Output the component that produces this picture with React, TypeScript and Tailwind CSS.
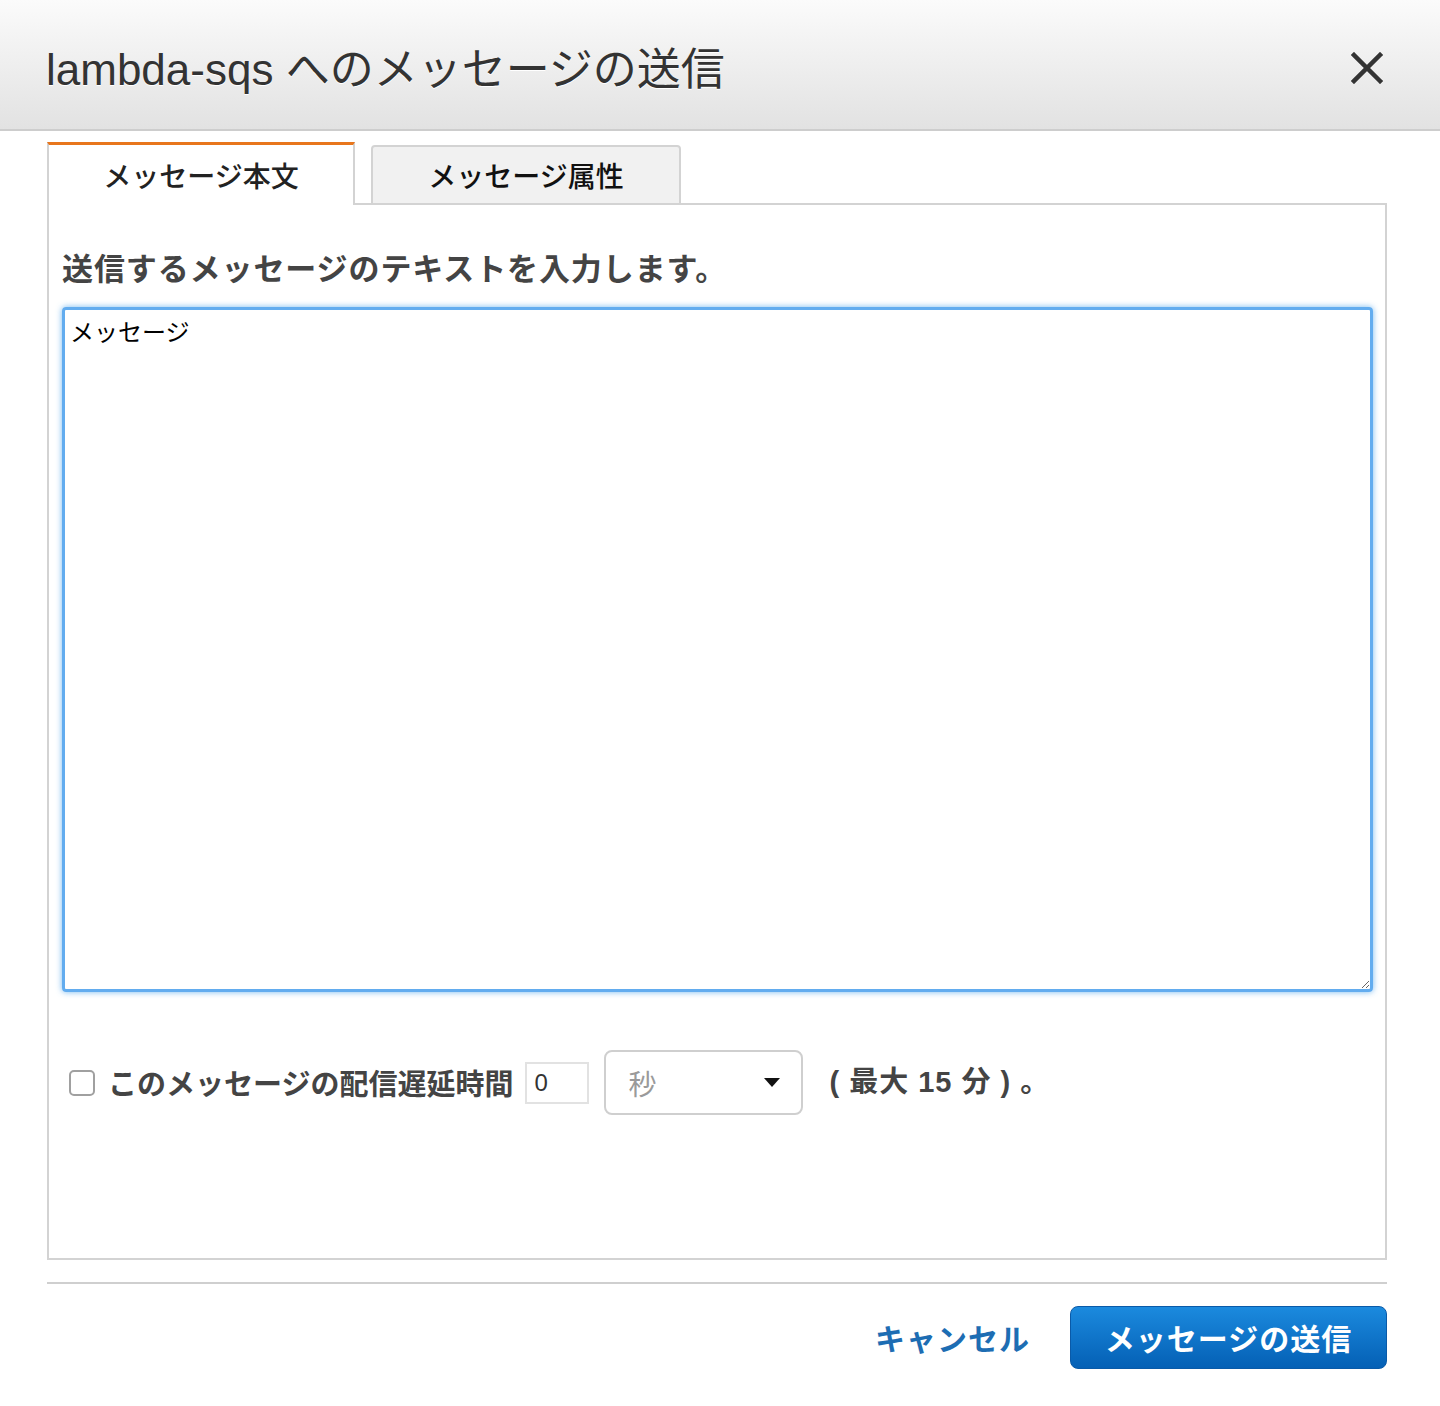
import React from "react";

const FONT = { fontFamily: '"Liberation Sans", "Noto Sans CJK JP", sans-serif' };

export default function App() {
  return (
    <div className="w-[1440px] h-[1406px] bg-white relative overflow-hidden" style={FONT}>
      {/* Header */}
      <div className="h-[131px] bg-gradient-to-b from-[#fbfbfb] to-[#e2e2e2] border-b-2 border-[#cdcdcd] flex items-center justify-between pl-[46px] pr-[57px]">
        <div className="text-[44px] leading-none text-[#333] pt-[10px] [text-shadow:0_1px_0_#fff]">
          lambda-sqs へのメッセージの送信
        </div>
        <svg width="32" height="32" viewBox="0 0 32 32" className="mt-[6px]">
          <path d="M3 3 L29 29 M29 3 L3 29" stroke="#333" strokeWidth="4.5" strokeLinecap="square" />
        </svg>
      </div>

      {/* Body */}
      <div className="pl-[47px] pr-[53px] pt-[11px]">
        {/* Tabs */}
        <div className="flex items-end h-[63px]">
          <div className="w-[308px] h-[63px] border-t-[3px] border-t-[#e8761c] border-l-2 border-r-2 border-x-[#d3d3d3] bg-white flex items-center justify-center">
            <span className="text-[28px] text-[#222] font-medium" style={{ fontFamily: '"Noto Sans CJK JP", sans-serif' }}>
              メッセージ本文
            </span>
          </div>
          <div className="w-[16px] h-full border-b-2 border-[#d3d3d3]" />
          <div className="w-[310px] h-[60px] bg-[#f1f1f1] border-2 border-[#d3d3d3] rounded-t-[4px] flex items-center justify-center">
            <span className="text-[28px] text-[#111] font-medium" style={{ fontFamily: '"Noto Sans CJK JP", sans-serif' }}>
              メッセージ属性
            </span>
          </div>
          <div className="flex-1 h-full border-b-2 border-[#d3d3d3]" />
        </div>

        {/* Panel */}
        <div className="h-[1055px] border-l-2 border-r-2 border-b-2 border-[#d3d3d3] pl-[13px] pt-[42px]">
          <div className="text-[31px] leading-[40px] font-bold text-[#444] tracking-[0.9px]" style={{ fontFamily: '"Noto Sans CJK JP", sans-serif' }}>
            送信するメッセージのテキストを入力します。
          </div>
          <textarea
            className="mt-[20px] block w-[1311px] h-[685px] border-[3px] border-[#62acef] rounded-[4px] shadow-[0_0_6px_rgba(82,168,236,0.8)] outline-none px-[5px] py-[4px] text-[24px] leading-[34px] text-black resize"
            style={{ fontFamily: '"Noto Sans CJK JP", sans-serif' }}
            defaultValue="メッセージ"
          />

          {/* Delay row */}
          <div className="mt-[58px] flex items-center h-[65px]">
            <span className="ml-[7px] w-[26px] h-[26px] border-2 border-[#a0a0a0] rounded-[5px] bg-white" />
            <span className="ml-[13px] text-[29px] font-bold text-[#444]" style={{ fontFamily: '"Noto Sans CJK JP", sans-serif' }}>
              このメッセージの配信遅延時間
            </span>
            <div className="ml-[12px] w-[64px] h-[42px] border-2 border-[#e2e2e2] flex items-center pl-[7px] text-[24px] text-[#333]">
              0
            </div>
            <div className="ml-[15px] w-[199px] h-[65px] border-2 border-[#cfcfcf] rounded-[8px] flex items-center justify-between pl-[22px] pr-[21px]">
              <span className="text-[28px] text-[#9a9a9a]" style={{ fontFamily: '"Noto Sans CJK JP", sans-serif' }}>秒</span>
              <svg width="16" height="10" viewBox="0 0 16 10">
                <path d="M0 0 L16 0 L8 9 Z" fill="#111" />
              </svg>
            </div>
            <span className="ml-[26px] text-[29px] font-bold text-[#444] whitespace-pre tracking-[1px]">
              ( 最大 15 分 ) 。
            </span>
          </div>
        </div>

        {/* Divider */}
        <div className="mt-[22px] h-[2px] bg-[#cfcfcf]" />

        {/* Footer buttons */}
        <div className="mt-[22px] flex items-center justify-end">
          <span className="text-[30px] font-bold text-[#1d6db3] tracking-[1px]" style={{ fontFamily: '"Noto Sans CJK JP", sans-serif' }}>
            キャンセル
          </span>
          <button className="ml-[40px] w-[317px] h-[63px] rounded-[8px] bg-gradient-to-b from-[#1b8ade] to-[#0560b5] border border-[#0a5aa8] text-white text-[30px] font-bold tracking-[1px] flex items-center justify-center" style={{ fontFamily: '"Noto Sans CJK JP", sans-serif' }}>
            メッセージの送信
          </button>
        </div>
      </div>
    </div>
  );
}
